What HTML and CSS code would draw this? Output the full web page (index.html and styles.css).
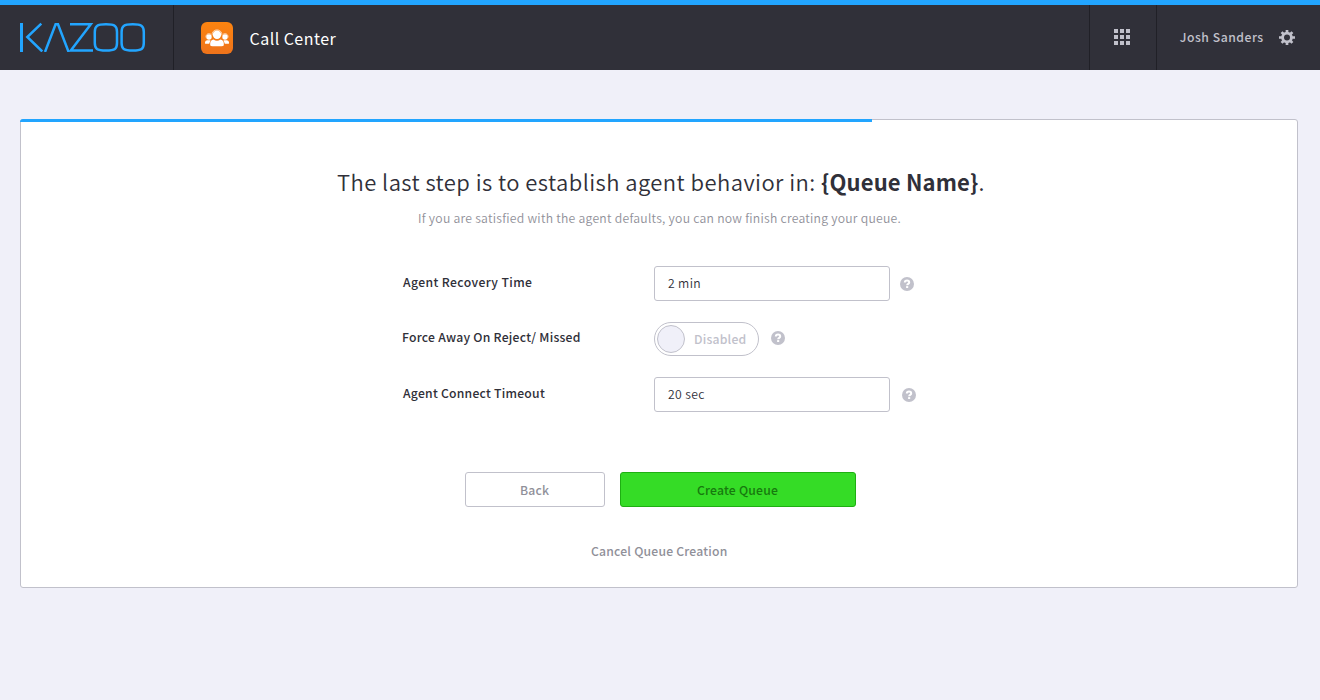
FILE: index.html
```html
<!DOCTYPE html>
<html lang="en">
<head>
<meta charset="utf-8">
<title>Call Center</title>
<link rel="stylesheet" href="styles.css">
</head>
<body>
<svg width="0" height="0" class="defs">
  <symbol id="help" viewBox="0 0 14 14">
    <circle cx="7" cy="7" r="7" fill="#c1c1cb"/>
    <path d="M4.800 5.500C4.900 4.100 5.900 3.600 7 3.600c1.300 0 2.200.7 2.200 1.800 0 1.500-2 1.400-2 2.900" fill="none" stroke="#fff" stroke-width="2"/>
    <rect x="6.100" y="9.100" width="2.100" height="1.900" fill="#fff"/>
  </symbol>
</svg>
<header class="topbar">
  <div class="brand">
    <svg width="126" height="30" viewBox="0 0 126 30" fill="none" stroke="#22a5ff" stroke-width="2.500">
      <path d="M1.500 1V30" stroke-width="3"/>
      <path d="M21.300 1.700 7.300 15 22.300 29.500"/>
      <path d="M25 30 35.600 2.300H38L48.600 30"/>
      <path d="M50 2.300H70.800L50.800 28.500H73"/>
      <path d="M86 2.300C95.200 2.300 97 4 97 10V21C97 26.800 95.200 28.500 86 28.500S74.800 26.800 74.800 21V10C74.800 4 76.800 2.300 86 2.300Z"/>
      <path d="M112.700 2.300C121.900 2.300 123.800 4 123.800 10V21C123.800 26.800 121.900 28.500 112.700 28.500S101.600 26.800 101.600 21V10C101.600 4 103.500 2.300 112.700 2.300Z"/>
    </svg>
  </div>
  <div class="app">
    <svg width="32" height="32" viewBox="0 0 32 32">
      <defs><linearGradient id="orange" x2="0" y2="1"><stop stop-color="#fc8410"/><stop offset="1" stop-color="#ee731b"/></linearGradient></defs>
      <rect width="32" height="32" rx="6" fill="url(#orange)"/>
      <g fill="#fff">
        <circle cx="8" cy="15" r="2.700"/><circle cx="24" cy="15" r="2.700"/>
        <path d="M4 21.500V20.500Q4 18.500 6 18.300H9.500L8.200 21.800H4.500ZM28 21.500V20.500Q28 18.500 26 18.300H22.500L23.800 21.800H27.500Z"/>
        <circle cx="16" cy="12.700" r="4.200"/>
        <path d="M9.200 23.200V21.500Q9.400 18 12.500 17.600Q16 20 19.500 17.600Q22.600 18 22.800 21.500V23.200Q22.500 24.300 20.500 24.300H11.500Q9.500 24.300 9.200 23.200Z"/>
      </g>
      <path d="M10.900 13.500C10.800 6 21.200 6 21.100 13.500M5 15.500C4.600 11.500 8.500 10.800 10 12.500M27 15.500C27.400 11.500 23.500 10.800 22 12.500" fill="none" stroke="#fff" stroke-opacity=".8" stroke-width=".8"/>
    </svg>
    <span class="app-name">Call Center</span>
  </div>
  <div class="apps">
    <svg width="16" height="16" viewBox="0 0 16 16" fill="#c1c1cb"><path d="M0 0h4v4H0zM6 0h4v4H6zM12 0h4v4h-4zM0 6h4v4H0zM6 6h4v4H6zM12 6h4v4h-4zM0 12h4v4H0zM6 12h4v4H6zM12 12h4v4h-4z"/></svg>
  </div>
  <div class="user">
    <span class="user-name">Josh Sanders</span>
    <svg class="gear" width="16" height="16" viewBox="0 0 16 16" fill="none" stroke="#c1c1cb">
      <circle cx="8" cy="7.500" r="4.400" stroke-width="2.800"/>
      <path d="M8 0V3M8 12V15M0 7.500H3M13 7.500H16M2.600 2.100 4.700 4.200M11.300 10.800 13.400 12.900M2.600 12.900 4.700 10.800M11.300 4.200 13.400 2.100" stroke-width="2.700"/>
    </svg>
  </div>
</header>
<main class="panel">
  <div class="progress"></div>
  <h1 class="title">The last step is to establish agent behavior in: <b>{Queue Name}</b>.</h1>
  <p class="subtitle">If you are satisfied with the agent defaults, you can now finish creating your queue.</p>
  <form class="form">
    <div class="row">
      <label class="label recovery">Agent Recovery Time</label>
      <div class="field">2 min</div>
      <svg class="help" width="14" height="14"><use href="#help"/></svg>
    </div>
    <div class="row">
      <label class="label force">Force Away On Reject/ Missed</label>
      <div class="toggle"><span class="knob"></span><span class="state">Disabled</span></div>
      <svg class="help help-toggle" width="14" height="14"><use href="#help"/></svg>
    </div>
    <div class="row">
      <label class="label timeout">Agent Connect Timeout</label>
      <div class="field">20 sec</div>
      <svg class="help help-timeout" width="14" height="14"><use href="#help"/></svg>
    </div>
  </form>
  <div class="actions">
    <div class="btn back">Back</div>
    <div class="btn create">Create Queue</div>
  </div>
  <div class="cancel"><span>Cancel Queue Creation</span></div>
</main>
</body>
</html>
```
FILE: styles.css
```css
* { box-sizing: border-box; }
body { margin: 0; height: 700px; background: #f0f0f9; color: #303039; font: 12.200px/20px "Noto Sans CJK SC", "Open Sans", sans-serif; letter-spacing: .2px; white-space: nowrap; overflow: hidden; }
svg { display: block; flex: none; }
.defs { position: absolute; }
.topbar { display: flex; height: 70px; border-top: 5px solid #22a5ff; background: #303039; }
.brand { width: 174px; padding: 17px 0 0 20px; border-right: 1px solid #202027; }
.app { display: flex; flex: 1; padding: 17px 0 0 27px; }
.app-name { margin: 5px 0 0 16.500px; color: #fff; font-size: 16px; line-height: 22px; letter-spacing: .46px; }
.apps { width: 68px; padding: 24px 0 0 24px; border-left: 1px solid #202027; border-right: 1px solid #202027; }
.user { display: flex; width: 163px; padding: 22px 0 0 22.800px; color: #c1c1cb; }
.user-name { width: 99.200px; font-weight: 500; letter-spacing: .52px; }
.gear { margin-top: 3px; }
.panel { width: 1278px; height: 469px; margin: 49px 0 0 20px; border: 1px solid #c1c1cb; border-radius: 3px; background: #fff; }
.progress { width: 852px; height: 3px; margin: -1px 0 0 -1px; background: #22a5ff; border-radius: 3px 0 0; }
.title { margin: 43px 0 0 316px; font-size: 22px; line-height: 32px; font-weight: 350; letter-spacing: .44px; }
.title b { font-weight: 700; letter-spacing: .15px; }
.subtitle { margin: 11px 0 0 397px; color: #909099; font-weight: 350; letter-spacing: .255px; }
.form { display: flex; flex-direction: column; gap: 20px; margin: 38px 0 0 381px; }
.row { display: flex; height: 35.500px; }
.label { width: 252px; padding: 6px 0 0 1px; font-weight: 500; }
.recovery { letter-spacing: .38px; }
.force { padding: 5px 0 0; letter-spacing: .25px; }
.timeout { letter-spacing: .24px; }
.field { width: 236px; height: 35px; padding: 6px 13px; border: 1px solid #c1c1cb; border-radius: 3px; font-weight: 350; letter-spacing: .35px; }
.help { margin: 11px 0 0 10px; }
.toggle { display: flex; width: 105px; height: 34px; padding: 2px; border: 1px solid #c1c1cb; border-radius: 17px; color: #c1c1cb; font-weight: 500; }
.knob { width: 28px; height: 28px; border: 1px solid #c1c1cb; border-radius: 50%; background: #f0f0f9; }
.state { margin: 4px 0 0 9px; }
.help-toggle { margin: 9px 0 0 12px; }
.help-timeout { margin-left: 12px; }
.actions { display: flex; gap: 15px; margin: 59px 0 0 444px; }
.btn { height: 35px; padding-right: 1px; border: 1px solid #c1c1cb; border-radius: 3px; line-height: 35px; text-align: center; font-weight: 500; color: #909099; }
.back { width: 140px; }
.create { width: 236px; border-color: #1eaf12; background: #35dc26; color: #17790e; }
.cancel { margin: 34px 0 0 570px; color: #909099; font-weight: 500; }
```
